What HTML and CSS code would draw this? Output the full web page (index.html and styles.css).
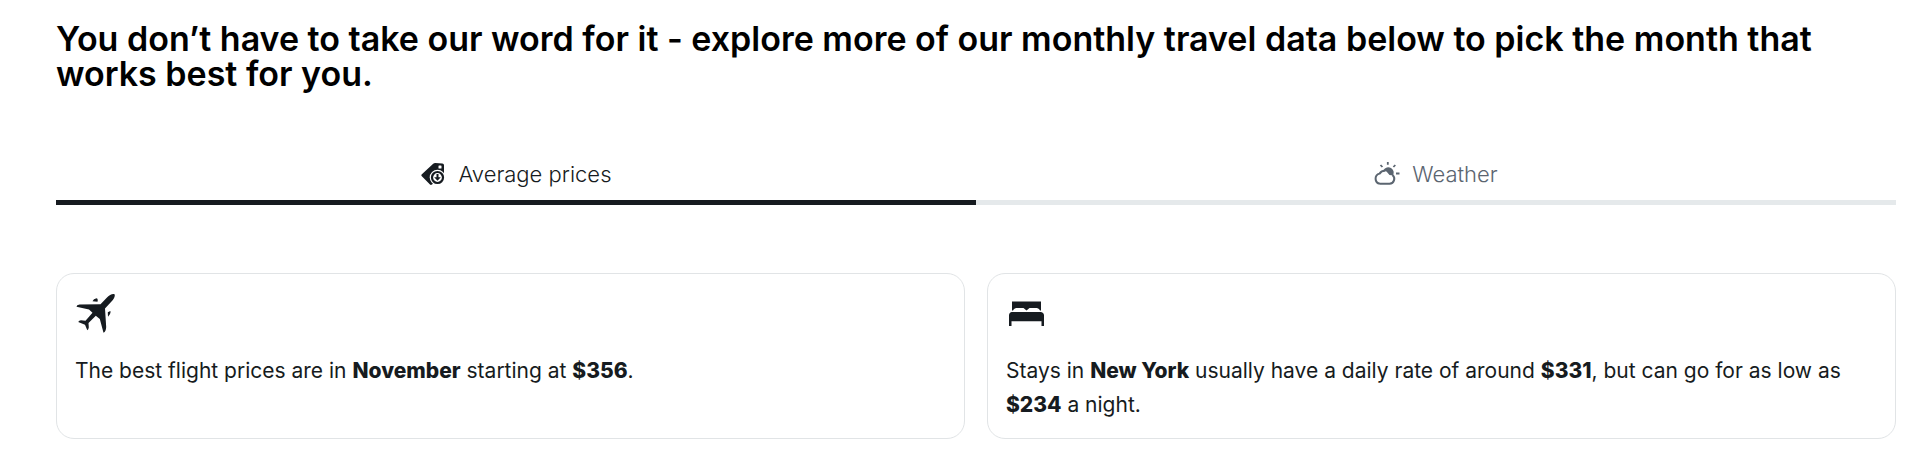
FILE: index.html
```html
<!DOCTYPE html>
<html lang="en">
<head>
    <meta charset="UTF-8">
    <meta name="viewport" content="width=device-width, initial-scale=1.0">
    <title>Monthly travel data</title>
    <link rel="stylesheet" href="styles.css">
</head>
<body>

    <main class="travel-data">
        <h2 class="title">You don’t have to take our word for it - explore more of our monthly travel data below to pick the month that works best for you.</h2>

        <div class="tabs" role="tablist">
            <button type="button" class="tab active" role="tab" id="pricesTab" aria-selected="true" aria-controls="pricesPanel">
                <svg class="tab-icon" viewBox="0 0 24 24" aria-hidden="true">
                    <path fill="currentColor" d="M.6 12.600 12.200 1.800Q13 1 14.200 1l7.200.6Q23 1.800 23 3.200V12L11 22.500Q9.800 23.300 9 22.500L.6 13.900Q0 13.200.6 12.600Z"/>
                    <rect x="17.500" y="3.500" width="3" height="3" rx=".6" fill="#fff"/>
                    <circle cx="16.500" cy="15.500" r="7.800" fill="#fff"/>
                    <circle cx="16.500" cy="15.500" r="5.500" fill="#fff" stroke="currentColor" stroke-width="2.200"/>
                    <path fill="currentColor" d="M15.500 12h2v3.200h2.300l-3.300 3.500-3.300-3.500h2.300Z"/>
                </svg>
                Average prices
            </button>
            <button type="button" class="tab" role="tab" id="weatherTab" aria-selected="false">
                <svg class="tab-icon" viewBox="0 0 24 24" aria-hidden="true">
                    <path fill="currentColor" d="M9.500 8A4.900 4.900 0 1 1 19 13.500L15.500 13Q13 9 9.500 8Z"/>
                    <path d="M6 21.800H15.500A5 5 0 0 0 18.500 13M11.500 8.800A6.400 6.400 0 0 0 5.600 11.600 5.200 5.200 0 0 0 6 21.800" fill="none" stroke="currentColor" stroke-width="2"/>
                    <path d="M13.800 0v2.800M6.500 3l1.900 2M21.300 3l-1.900 2M22 11.500h3.500" fill="none" stroke="currentColor" stroke-width="1.800"/>
                </svg>
                Weather
            </button>
        </div>

        <div class="cards" role="tabpanel" id="pricesPanel" aria-labelledby="pricesTab">
            <div class="card">
                <svg class="card-icon" viewBox="0 0 40 40" aria-hidden="true">
                    <path d="M39.500 1.200C40.500 3 38.800 6.200 35.800 9.300L30 15.500 31.200 34Q31 38.500 28.500 39.800L24.800 26 20.800 22.800 13.500 30 13.800 34.500Q13.500 36.500 12.300 37.200L10 31.800 3.200 29Q4 27.500 6 27.300L10.500 27.800 17.500 19.800 14 16.500 1.500 13.800Q1.500 12 4.500 11.500L25.500 11.200 31.500 5C34.500 2 37.500.3 39.500 1.200ZM17.500 8.300Q18.500 5.500 21.500 5.200 23.300 5.500 22.500 8.700ZM32.800 19.200 35.300 18Q36.300 20.500 33 23.800Z"/>
                </svg>
                <p class="card-text">The best flight prices are in <strong>November</strong> starting at <strong>$356</strong>.</p>
            </div>
            <div class="card">
                <svg class="card-icon" viewBox="0 0 40 40" aria-hidden="true">
                    <path d="M6 8.500H35V17.500H34Q33.500 15.500 31 15H23.500L20.500 17.500 17.500 15H10Q7.500 15.500 7 17.500H6ZM5.500 19H35Q38 19.500 38 22.500V33H35.500V28.300H5.500V33H3V22.500Q3 19.500 5.500 19Z"/>
                </svg>
                <p class="card-text">Stays in <strong>New York</strong> usually have a daily rate of around <strong>$331</strong>, but can go for as low as <strong>$234</strong> a night.</p>
            </div>
        </div>
    </main>

</body>
</html>
```

FILE: styles.css
```css
body {
    font-family: Inter, "Liberation Sans", sans-serif;
    margin: 0;
    background-color: #fff;
    color: #161b20;
}

.travel-data {
    padding: 21px 24px 24px 56px;
}

.title {
    margin: 0;
    font-size: 34px;
    line-height: 35px;
    font-weight: 600;
    color: #000;
}

.tabs {
    display: flex;
    margin-top: 56px;
}

.tab {
    flex: 1;
    display: flex;
    align-items: center;
    justify-content: center;
    gap: 14px;
    padding: 10px 0 9px;
    border: none;
    border-bottom: 5px solid #e5e9eb;
    background: none;
    font-family: inherit;
    font-size: 22px;
    line-height: 34px;
    font-weight: 300;
    color: #5b6570;
    cursor: pointer;
}

.tab.active {
    border-bottom-color: #161b20;
    color: #161b20;
}

.tab-icon {
    width: 24px;
    height: 24px;
    overflow: visible;
}

/* Cards */
.cards {
    display: grid;
    grid-template-columns: 1fr 1fr;
    gap: 22px;
    margin-top: 68px;
}

.card {
    padding: 19px 18px 16px;
    border: 1px solid #e1e4e6;
    border-radius: 18px;
}

.card-icon {
    display: block;
    width: 40px;
    height: 40px;
    fill: #161b20;
}

.card-text {
    margin: 21px 0 0;
    font-size: 21px;
    line-height: 34px;
    font-weight: 400;
}

.card-text strong {
    font-weight: 800;
}
```
